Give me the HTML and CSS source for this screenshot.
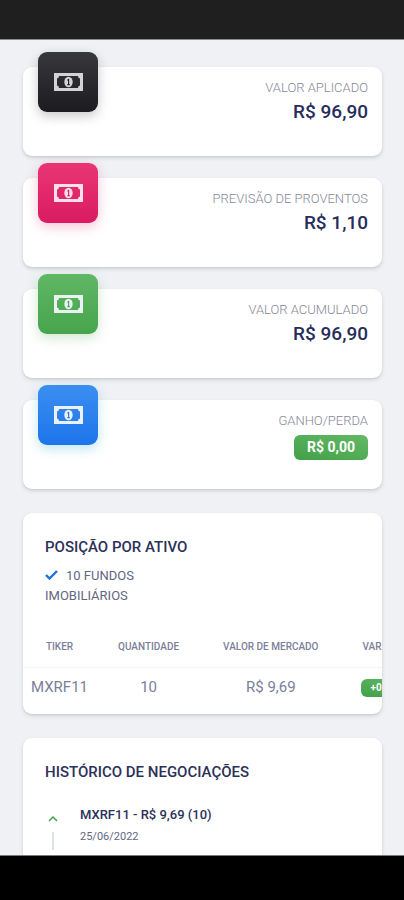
FILE: index.html
```html
<!DOCTYPE html>
<html lang="pt-BR">
<head>
<meta charset="utf-8">
<meta name="viewport" content="width=device-width, initial-scale=1">
<title>Carteira</title>
<link rel="stylesheet" href="styles.css">
</head>
<body>
<svg class="symbols" aria-hidden="true">
  <symbol id="banknote" viewBox="0 0 29 18">
    <path fill="currentColor" fill-rule="evenodd" d="M0 0h29v18H0zM5 3a2.500 2.500 0 0 1-2 2.500v7A2.500 2.500 0 0 1 5 15h19a2.500 2.500 0 0 1 2-2.500v-7A2.500 2.500 0 0 1 24 3z"/>
    <ellipse cx="14.500" cy="9" rx="4.200" ry="5.200" fill="currentColor"/>
    <path d="M13.400 7.200l1.200-.7v5M13.200 11.700h2.800" fill="none" stroke="var(--tile)" stroke-width="1.100"/>
  </symbol>
</svg>
<header class="status-bar"></header>
<main class="content">
  <section class="stats">
    <article class="card stat">
      <div class="tile tile-dark"><svg class="note"><use href="#banknote"/></svg></div>
      <div class="stat-text"><p class="label">VALOR APLICADO</p><p class="value">R$ 96,90</p></div>
    </article>
    <article class="card stat">
      <div class="tile tile-pink"><svg class="note"><use href="#banknote"/></svg></div>
      <div class="stat-text"><p class="label">PREVISÃO DE PROVENTOS</p><p class="value">R$ 1,10</p></div>
    </article>
    <article class="card stat">
      <div class="tile tile-green"><svg class="note"><use href="#banknote"/></svg></div>
      <div class="stat-text"><p class="label">VALOR ACUMULADO</p><p class="value">R$ 96,90</p></div>
    </article>
    <article class="card stat">
      <div class="tile tile-blue"><svg class="note"><use href="#banknote"/></svg></div>
      <div class="stat-text"><p class="label">GANHO/PERDA</p><p class="badge">R$ 0,00</p></div>
    </article>
  </section>
  <section class="card position">
    <div class="card-head">
      <h2>POSIÇÃO POR ATIVO</h2>
      <p class="summary"><svg class="check" viewBox="0 0 13 10"><path d="M1 5l3.500 3.500L12 1" fill="none" stroke="currentColor" stroke-width="2.400"/></svg>10 FUNDOS<br>IMOBILIÁRIOS</p>
    </div>
    <div class="table-scroll">
      <table>
        <thead><tr><th>TIKER</th><th>QUANTIDADE</th><th>VALOR DE MERCADO</th><th>VARIAÇÃO</th></tr></thead>
        <tbody><tr><td>MXRF11</td><td>10</td><td>R$ 9,69</td><td><span class="badge badge-small">+0,00%</span></td></tr></tbody>
      </table>
    </div>
  </section>
  <section class="card history">
    <h2>HISTÓRICO DE NEGOCIAÇÕES</h2>
    <div class="trade">
      <div class="marker">
        <svg class="caret" viewBox="0 0 10 6"><path d="M1 5l4-4 4 4" fill="none" stroke="currentColor" stroke-width="1.500"/></svg>
        <span class="line"></span>
      </div>
      <div><h3>MXRF11 - R$ 9,69 (10)</h3><p class="date">25/06/2022</p></div>
    </div>
  </section>
</main>
<footer class="nav-bar"></footer>
</body>
</html>
```
FILE: styles.css
```css
* { box-sizing: border-box; }
body {
  margin: 0;
  height: 100vh;
  display: flex;
  flex-direction: column;
  background: #eff1f5;
  color: #2b3159;
  font-family: Roboto, sans-serif;
}
h2, h3, p { margin: 0; }
.symbols { position: absolute; width: 0; height: 0; }
.status-bar { flex: 0 0 40px; background: #1f1f1f; border-bottom: 1px solid #8b8c8e; }
.nav-bar { flex: 0 0 45px; background: #000; border-top: 1px solid #77797b; }
.content {
  flex: 1;
  min-height: 0;
  overflow-y: auto;
  scrollbar-width: none;
  padding: 27px 22px 24px 23px;
  display: flex;
  flex-direction: column;
  gap: 24px;
}
.card {
  flex: none;
  background: #fff;
  border-radius: 9px;
  box-shadow: 0 2px 4px rgba(0, 0, 0, .12), 0 1px 2px rgba(0, 0, 0, .06);
}
.stats { flex: none; display: grid; gap: 22px; }
.stat {
  position: relative;
  min-height: 89px;
  padding: 12px 14px 20px 15px;
  display: flex;
  justify-content: flex-end;
}
.tile {
  position: absolute;
  left: 15px;
  top: -15px;
  width: 60px;
  height: 60px;
  border-radius: 9px;
  display: flex;
  align-items: center;
  justify-content: center;
  background: linear-gradient(var(--tile-top), var(--tile));
  box-shadow: 0 4px 12px var(--glow);
  color: #e9f1f2;
}
.tile-dark { --tile-top: #37373c; --tile: #1c1c20; --glow: rgba(0, 0, 0, .22); color: #d3d3d5; }
.tile-pink { --tile-top: #e93673; --tile: #da1b62; --glow: rgba(216, 27, 96, .25); color: #fbdfe9; }
.tile-green { --tile-top: #60b765; --tile: #47a44c; --glow: rgba(67, 160, 71, .25); }
.tile-blue { --tile-top: #3b8ef0; --tile: #1d75ea; --glow: rgba(0, 160, 190, .25); }
.note { width: 29px; height: 18px; }
.stat-text { display: flex; flex-direction: column; align-items: flex-end; }
.label { font-size: 13px; line-height: 17px; font-weight: 300; color: #858896; }
.value { font-size: 19px; line-height: 32px; font-weight: 500; color: #262d5c; }
.badge {
  display: inline-block;
  margin-top: 6px;
  padding: 0 13px;
  border-radius: 6px;
  background: linear-gradient(195deg, #63b967, #43a047);
  color: #fff;
  font-size: 14px;
  line-height: 25px;
  font-weight: 700;
}
.card-head { padding: 22px 22px 0; }
h2 { font-size: 15px; line-height: 24px; font-weight: 500; }
.summary { padding-top: 7px; font-size: 13px; line-height: 20px; font-weight: 400; color: #62677f; }
.check { width: 13px; height: 10px; margin-right: 8px; color: #1d70df; }
.table-scroll { margin-top: 31px; padding-bottom: 7px; overflow-x: auto; scrollbar-width: none; border-radius: 0 0 9px 9px; }
table { border-collapse: collapse; white-space: nowrap; text-align: center; color: #7b809a; }
th {
  padding: 0 22px 10px;
  height: 30px;
  font-size: 10px;
  line-height: 20px;
  font-weight: 500;
  border-bottom: 1px solid #f4f5f7;
}
td { height: 39px; padding: 0 8px; font-size: 15px; line-height: 20px; font-weight: 400; }
.badge-small { margin: 0; padding: 0 10px; border-radius: 6px; font-size: 10px; line-height: 18px; vertical-align: middle; }
.history { padding: 22px; }
.trade { display: flex; gap: 19px; padding-top: 19px; }
.marker { width: 16px; display: flex; flex-direction: column; align-items: center; padding-top: 13px; gap: 10px; }
.caret { width: 10px; height: 6px; color: #43a047; }
.line { width: 2px; height: 18px; background: #dee2e6; }
h3 { font-size: 13px; line-height: 24px; font-weight: 500; }
.date { font-size: 11px; line-height: 20px; color: #62677f; }
```
